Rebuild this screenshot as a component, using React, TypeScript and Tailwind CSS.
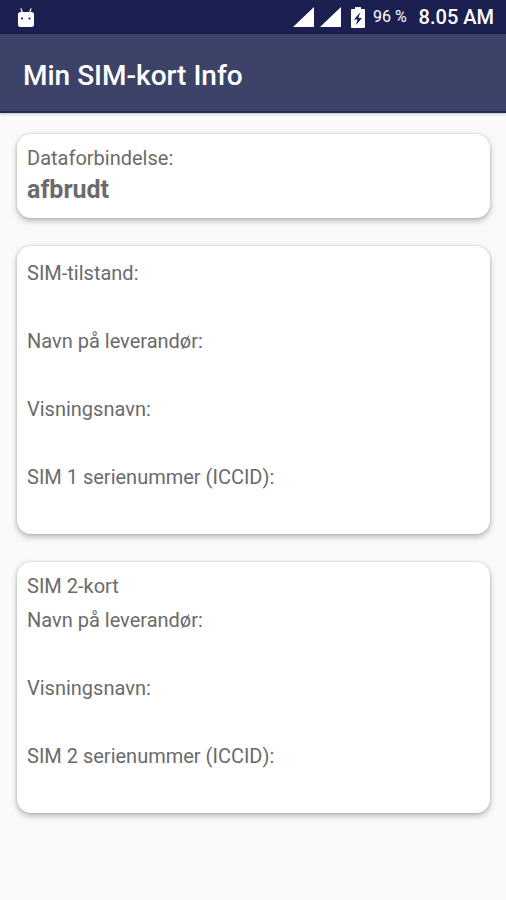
import { clsx } from "clsx";
import type { ReactNode } from "react";

type Field = { label: string; value?: string };

const simOne: Field[] = [
  { label: "SIM-tilstand:" },
  { label: "Navn på leverandør:" },
  { label: "Visningsnavn:" },
  { label: "SIM 1 serienummer (ICCID):" },
];

const simTwo: Field[] = [
  { label: "Navn på leverandør:" },
  { label: "Visningsnavn:" },
  { label: "SIM 2 serienummer (ICCID):" },
];

const SignalIcon = () => (
  <svg viewBox="0 0 21 20" className="h-5 w-[21px]" fill="#fff">
    <path d="M0 20 21 0v20z" />
  </svg>
);

const BatteryIcon = () => (
  <svg viewBox="0 0 14 21" className="h-[21px] w-3.5">
    <path
      fill="#fff"
      d="M4 0h6v2H13a1 1 0 0 1 1 1v17a1 1 0 0 1-1 1H1a1 1 0 0 1-1-1V3a1 1 0 0 1 1-1h3z"
    />
    <path fill="#1b2050" d="M9 5.5 3 12.5h3.5L5 18l6-7H7.5z" />
  </svg>
);

const AndroidIcon = () => (
  <svg viewBox="0 0 16 19" className="h-[19px] w-4">
    <path
      d="m3 .8 1.5 4M13 .8l-1.5 4"
      stroke="#fff"
      strokeWidth="1.2"
      strokeLinecap="round"
    />
    <rect y="4" width="16" height="15" rx="2.5" fill="#fff" />
    <circle cx="4" cy="10.5" r="1.1" fill="#1b2050" />
    <circle cx="11.5" cy="10.5" r="1.1" fill="#1b2050" />
  </svg>
);

const Card = ({ children, className }: { children: ReactNode; className?: string }) => (
  <section
    className={clsx(
      "rounded-[14px] bg-white px-2.5 shadow-[0_3px_6px_rgba(0,0,0,0.26),0_0_3px_rgba(0,0,0,0.16)]",
      className,
    )}
  >
    {children}
  </section>
);

const FieldList = ({ fields }: { fields: Field[] }) => (
  <dl>
    {fields.map((field) => (
      <div key={field.label}>
        <dt>{field.label}</dt>
        <dd className="h-[34px] font-bold">{field.value}</dd>
      </div>
    ))}
  </dl>
);

const App = () => {
  return (
    <div className="min-h-screen bg-[#fafafa] font-['Roboto',sans-serif] text-xl leading-[34px] text-[#6b6b6b]">
      <div className="flex h-[34px] items-center justify-between bg-[#1b2050] pr-3 pl-[18px] text-white">
        <AndroidIcon />
        <div className="flex items-center">
          <div className="flex items-center gap-1.5">
            <SignalIcon />
            <SignalIcon />
          </div>
          <div className="ml-2.5 flex items-center gap-2">
            <BatteryIcon />
            <span className="text-base">96 %</span>
          </div>
          <span className="ml-3 text-xl font-medium">8.05 AM</span>
        </div>
      </div>

      <header className="flex h-[79px] items-center border-b-2 border-[#1b2a62] bg-[#3d4268] px-[23px] pt-1.5 shadow-[0_1px_3px_rgba(0,0,0,0.25)]">
        <h1 className="text-[28px] font-medium text-white">Min SIM-kort Info</h1>
      </header>

      <main className="flex flex-col gap-7 pt-[21px] pr-4 pb-8 pl-[17px]">
        <Card className="pt-2 pb-3">
          <p className="leading-8">Dataforbindelse:</p>
          <p className="text-[25px] leading-8 font-bold">afbrudt</p>
        </Card>

        <Card className="pt-2.5 pb-1.5">
          <FieldList fields={simOne} />
        </Card>

        <Card className="pt-[7px] pb-1.5">
          <h2>SIM 2-kort</h2>
          <FieldList fields={simTwo} />
        </Card>
      </main>
    </div>
  );
};

export default App;
